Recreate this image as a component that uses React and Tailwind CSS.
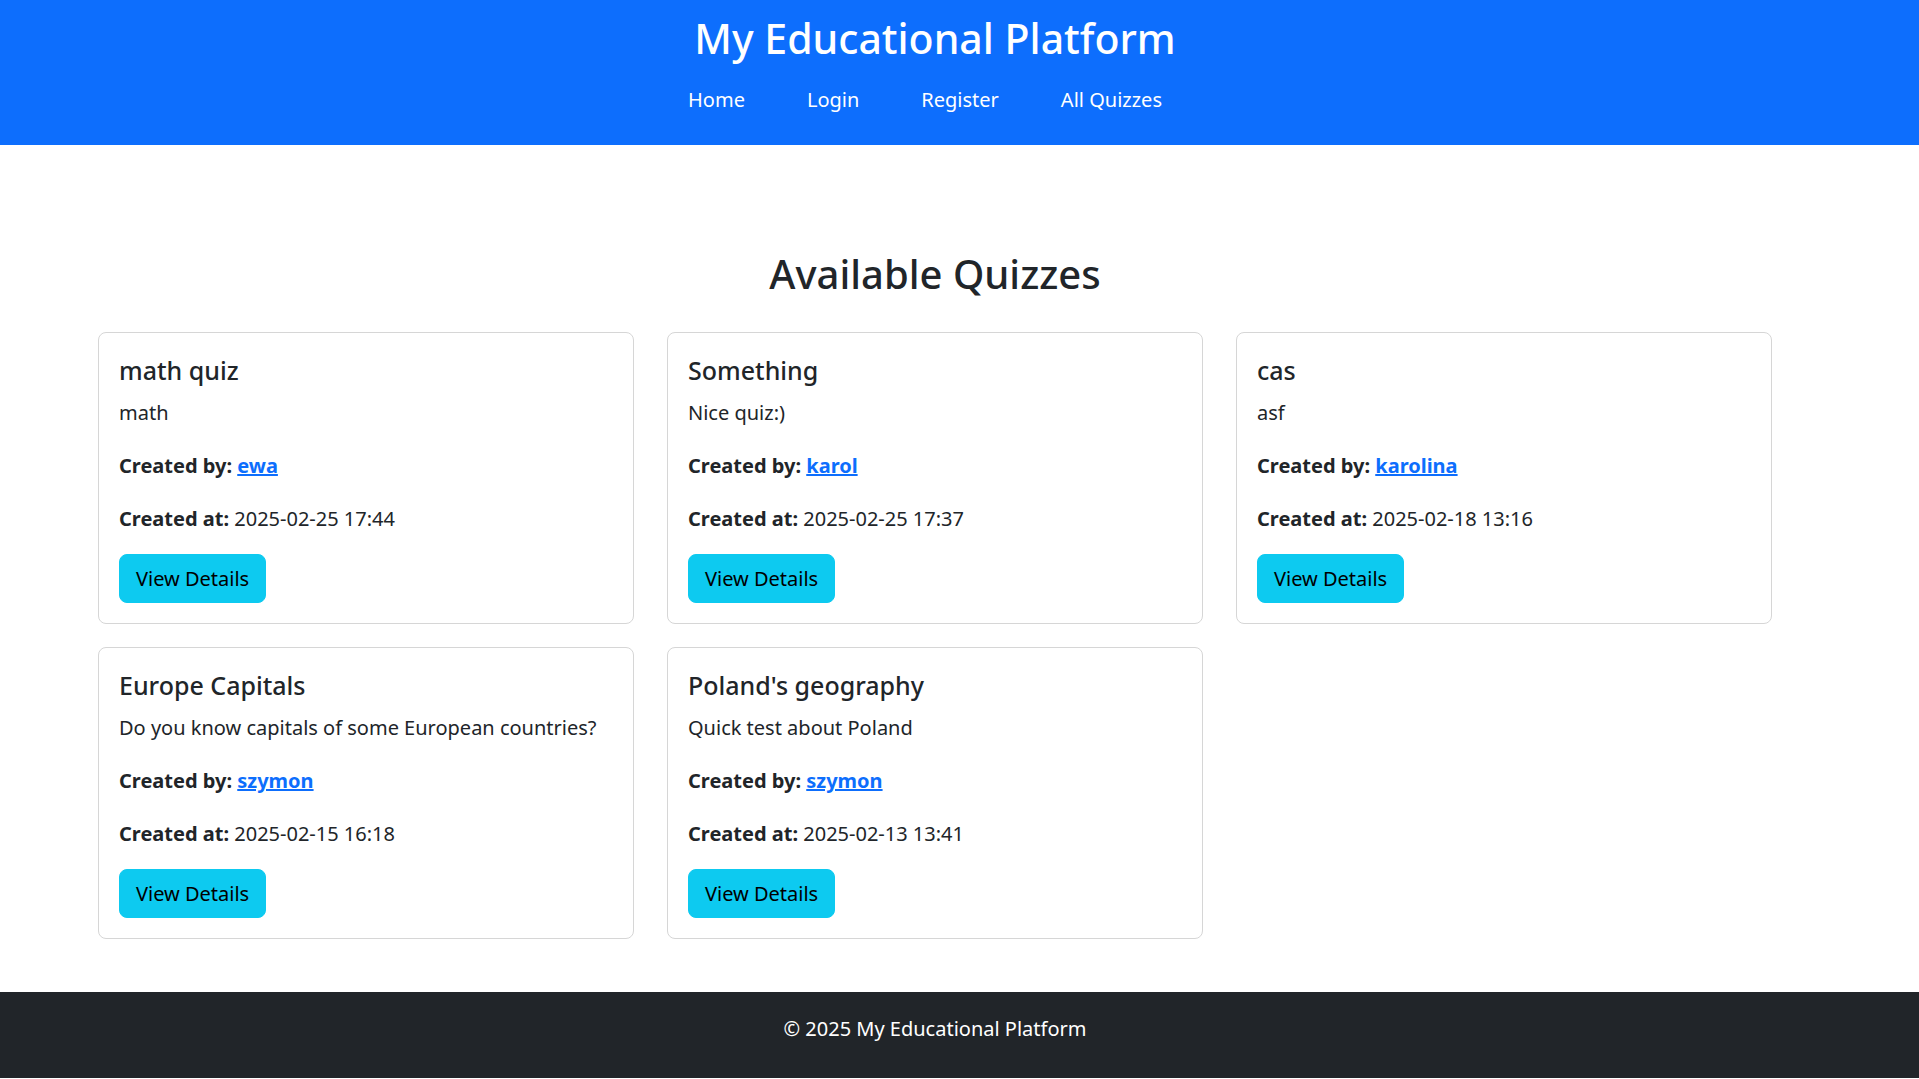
import React from "react";

const quizzes = [
  { title: "math quiz", desc: "math", author: "ewa", date: "2025-02-25 17:44" },
  { title: "Something", desc: "Nice quiz:)", author: "karol", date: "2025-02-25 17:37" },
  { title: "cas", desc: "asf", author: "karolina", date: "2025-02-18 13:16" },
  {
    title: "Europe Capitals",
    desc: "Do you know capitals of some European countries?",
    author: "szymon",
    date: "2025-02-15 16:18",
  },
  { title: "Poland's geography", desc: "Quick test about Poland", author: "szymon", date: "2025-02-13 13:41" },
];

function QuizCard({ quiz }) {
  return (
    <div className="w-[536px] h-[292px] border border-[#d6d6d6] rounded-[8px] bg-white px-[20px] pt-[22px] pb-[20px] flex flex-col">
      <h5 className="text-[25px] leading-[30px] font-medium">{quiz.title}</h5>
      <p className="mt-[13px] text-[20px] leading-[30px]">{quiz.desc}</p>
      <p className="mt-[23px] text-[20px] leading-[30px]">
        <strong className="font-bold">Created by: </strong>
        <a href="#" className="font-bold text-[#0d6efd] underline">
          {quiz.author}
        </a>
      </p>
      <p className="mt-[23px] text-[20px] leading-[30px]">
        <strong className="font-bold">Created at:</strong> {quiz.date}
      </p>
      <div className="mt-[20px]">
        <button className="h-[49px] px-[16px] bg-[#0dcaf0] border border-[#0dcaf0] rounded-[8px] text-[20px] text-black">
          View Details
        </button>
      </div>
    </div>
  );
}

export default function App() {
  return (
    <div className="min-h-screen bg-white text-[#212529] font-['Noto_Sans',sans-serif]">
      {/* navbar */}
      <header className="bg-[#0d6efd] h-[145px] text-white">
        <div className="w-[1870px] flex flex-col items-center pt-[12px]">
          <h1 className="text-[41px] leading-[52px] font-medium">My Educational Platform</h1>
          <nav className="mt-[21px] pr-[20px] flex gap-[62px] text-[20px] leading-[30px]">
            <a href="#">Home</a>
            <a href="#">Login</a>
            <a href="#">Register</a>
            <a href="#">All Quizzes</a>
          </nav>
        </div>
      </header>

      <main className="w-[1870px] pt-[105px] pb-[53px]">
        <h2 className="text-center text-[40px] leading-[48px] font-medium">Available Quizzes</h2>
        <div className="mt-[34px] pl-[98px] grid grid-cols-[repeat(3,536px)] gap-x-[33px] gap-y-[23px]">
          {quizzes.map((q) => (
            <QuizCard key={q.title} quiz={q} />
          ))}
        </div>
      </main>

      <footer className="bg-[#212529] text-white pt-[22px] pb-[34px]">
        <p className="w-[1870px] text-center text-[20px] leading-[30px]">© 2025 My Educational Platform</p>
      </footer>
    </div>
  );
}
